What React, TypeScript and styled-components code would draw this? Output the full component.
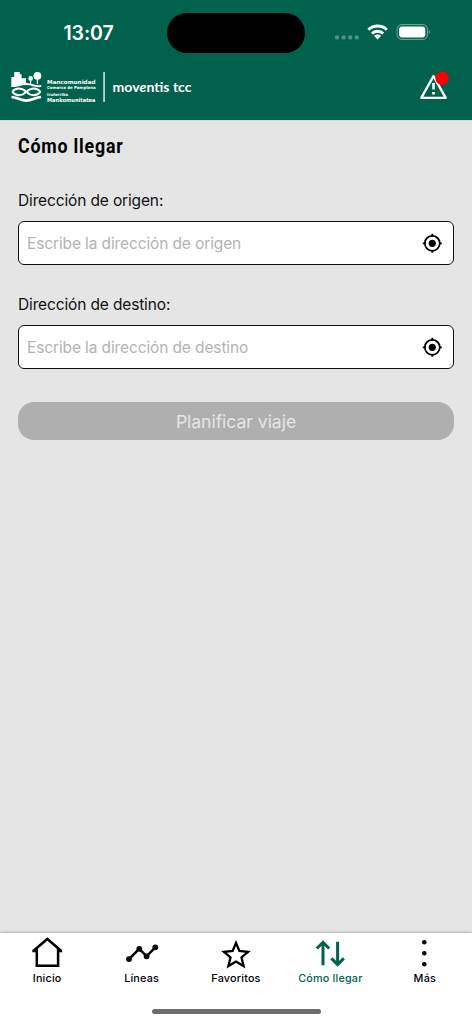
import React from "react";
import styled, { createGlobalStyle } from "styled-components";

const GREEN = "#00624c";

const GlobalStyle = createGlobalStyle`
  *, *::before, *::after { box-sizing: border-box; }
  html, body { margin: 0; padding: 0; }
  body { font-family: Inter, "Liberation Sans", sans-serif; color: #111; }
`;

const Screen = styled.div`
  display: flex;
  flex-direction: column;
  width: 100%;
  height: 1024px;
  background: #e5e5e5;
`;

const Header = styled.header`
  height: 120px;
  flex: none;
  background: ${GREEN};
  color: #fff;
`;

const StatusBar = styled.div`
  display: grid;
  grid-template-columns: 167px 138px 1fr;
  height: 65px;
  align-items: center;
`;

const Clock = styled.time`
  padding-left: 10px;
  text-align: center;
  font-size: 19.5px;
  font-weight: 600;
  line-height: 24px;
  letter-spacing: -0.1px;
`;

const Island = styled.div`
  height: 40px;
  border-radius: 20px;
  background: #000;
`;

const StatusIcons = styled.svg`
  display: block;
  width: 167px;
  height: 65px;
`;

const BrandBar = styled.div`
  display: flex;
  justify-content: space-between;
  height: 55px;
`;

const AlertButton = styled.button`
  width: 60px;
  height: 55px;
  padding: 0;
  border: 0;
  background: none;
  svg { display: block; }
`;

const Main = styled.main`
  flex: 1;
  padding: 12px 18px 0;
  border-top: 1px solid #d5dcda;
`;

const Title = styled.h1`
  margin: 0;
  height: 26px;
  font-family: Roboto, sans-serif;
  font-size: 20px;
  line-height: 26px;
  font-weight: 700;
  letter-spacing: 0.9px;
  color: #000;
  transform: scaleX(0.89);
  transform-origin: left;
`;

const Form = styled.form`
  display: flex;
  flex-direction: column;
  gap: 28px;
  padding-top: 30px;
`;

const Field = styled.label`
  display: flex;
  flex-direction: column;
  gap: 8px;
`;

const FieldLabel = styled.span`
  font-size: 15.5px;
  line-height: 24px;
  letter-spacing: -0.14px;
`;

const InputBox = styled.span`
  display: flex;
  align-items: center;
  height: 44px;
  padding: 0 11px 0 8px;
  border: 1px solid #111;
  border-radius: 6px;
  background: #fff;
`;

const Input = styled.input`
  flex: 1;
  min-width: 0;
  padding: 2px 0 0;
  border: 0;
  outline: 0;
  background: none;
  font: 400 15.5px/24px Inter, sans-serif;
  letter-spacing: -0.12px;
  &::placeholder { color: #b3b3b3; opacity: 1; }
`;

const PlanButton = styled.button`
  height: 38px;
  margin-top: 5px;
  padding: 1px 0 0;
  border: 0;
  border-radius: 16px;
  background: #afafaf;
  color: #e5e5e5;
  font: 400 17.6px/24px Inter, sans-serif;
  letter-spacing: -0.05px;
`;

const TabBar = styled.nav`
  display: grid;
  grid-template-columns: repeat(5, 1fr);
  height: 91px;
  flex: none;
  background: #fff;
  box-shadow: 0 -1px 2px rgba(0, 0, 0, 0.22);
  align-content: start;
`;

const Tab = styled.a<{ $active?: boolean }>`
  display: flex;
  flex-direction: column;
  align-items: center;
  gap: 2px;
  color: ${(p) => (p.$active ? GREEN : "#000")};
  font-size: 10.8px;
  font-weight: 500;
  line-height: 14px;
  letter-spacing: 0.19px;
  white-space: nowrap;
  svg { display: block; }
`;

const HomeIndicator = styled.div`
  grid-column: 1 / -1;
  justify-self: center;
  width: 169px;
  height: 5px;
  margin-top: 23px;
  border-radius: 3px;
  background: #6c6c6c;
`;

const Logo = () => (
  <svg width="210" height="55" viewBox="0 65 210 55" fill="#fff">
    <path d="M11.300 87V77h2.900v-5h5.600v2.200h1.800v4H26v5.300c-5-.5-8 3.500-14.700 3.500Z" />
    <circle cx="30.600" cy="78.400" r="2.300" />
    <circle cx="37.400" cy="75.800" r="3.900" />
    <path d="M30 79h1.200v5H30zM36.800 79H38v5h-1.200z" />
    <path d="M11.300 86.800c5-.2 8-3.900 15-3.900 6.500 0 10 3.700 15 2v2.200c-6 .8-9-2.200-15-2.200s-9.500 2.500-15 1.900Z" />
    <g fill="none" stroke="#fff">
      <path d="M12.200 91.900c3.500-4.400 9.500-4.400 14.100 0s10.600 4.400 14.100 0" strokeWidth="2" />
      <path d="M12.200 91.900c3.500 4.400 9.500 4.400 14.100 0s10.600-4.400 14.100 0" strokeWidth="2" />
      <path d="M11.500 97c5.500.2 9 3.700 14.800 3.700s9.300-3.500 14.800-3.700" strokeWidth="2.700" />
    </g>
    <g fontFamily="'DejaVu Sans', sans-serif" fontWeight="700">
      <text x="47" y="84" fontSize="5.500" textLength="48.500" lengthAdjust="spacingAndGlyphs">Mancomunidad</text>
      <text x="47" y="89.300" fontSize="4" textLength="48.500" lengthAdjust="spacingAndGlyphs">Comarca de Pamplona</text>
      <text x="47" y="96" fontSize="4" textLength="21" lengthAdjust="spacingAndGlyphs">Iruñerriko</text>
      <text x="47" y="101.600" fontSize="5.500" textLength="48.500" lengthAdjust="spacingAndGlyphs">Mankomunitatea</text>
    </g>
    <path d="M103.400 72h1.300v30h-1.300z" />
    <text x="112.500" y="91.700" fontFamily="Lato, sans-serif" fontWeight="700" fontSize="13.800" textLength="79" lengthAdjust="spacingAndGlyphs">
      mov<tspan fontStyle="italic">e</tspan>ntis tcc
    </text>
  </svg>
);

const DeviceStatus = () => (
  <StatusIcons viewBox="305 0 167 65" fill="#fff">
    <g opacity=".3">
      <circle cx="337" cy="37.400" r="2.200" />
      <circle cx="343.600" cy="37.400" r="2.200" />
      <circle cx="350.200" cy="37.400" r="2.200" />
      <circle cx="356.800" cy="37.400" r="2.200" />
    </g>
    <g fill="none" stroke="#fff" strokeWidth="2.900">
      <path d="M368.400 29.700a13.200 13.200 0 0 1 18.400 0" />
      <path d="M371.900 33.600a8 8 0 0 1 11.400 0" />
    </g>
    <path d="M374 35.800q3.600-3 7.200 0l-3.600 3.600Z" />
    <rect x="397.100" y="24.600" width="30.300" height="14.800" rx="4.700" fill="none" stroke="#fff" strokeOpacity=".45" />
    <rect x="399" y="26.600" width="26.300" height="10.800" rx="3.200" />
    <path d="M428.800 29.800q2 2.200 0 4.400Z" opacity=".5" />
  </StatusIcons>
);

const AlertIcon = () => (
  <svg width="60" height="55" viewBox="412 65 60 55">
    <path d="M433.500 76.100 421.300 97.900h24.400Z" fill="none" stroke="#fff" strokeWidth="2.300" strokeLinejoin="round" />
    <path d="M432.200 83h2.600v6.500h-2.600zM432.200 92h2.600v2.600h-2.600z" fill="#fff" />
    <circle cx="442.100" cy="78.300" r="6.700" fill="red" />
  </svg>
);

const LocateIcon = () => (
  <svg width="20" height="20" viewBox="0 0 20 20">
    <circle cx="10.300" cy="10.300" r="7.500" fill="none" stroke="#000" strokeWidth="1.800" />
    <circle cx="10.300" cy="10.300" r="3.600" />
    <path d="M10.300.8v2.500M10.300 17.300v2.500M.8 10.300h2.500M17.300 10.300h2.500" stroke="#000" strokeWidth="1.800" />
  </svg>
);

const HomeIcon = () => (
  <svg width="40" height="37" viewBox="0 0 40 37" fill="none" stroke="currentColor" strokeWidth="2.500">
    <path d="M6 18.200 20.300 6l14.300 12.200M5.300 18h4.500M30.500 18h4.700M9.800 16v16.800h21.300V16" />
  </svg>
);

const LinesIcon = () => (
  <svg width="40" height="37" viewBox="0 0 40 37" fill="currentColor">
    <path d="m7 26.100 10.300-10.300 7.300 7.500 8.700-9" fill="none" stroke="currentColor" strokeWidth="2.500" />
    <circle cx="7" cy="26.100" r="2.900" />
    <circle cx="17.300" cy="15.800" r="2.900" />
    <circle cx="24.600" cy="23.300" r="2.900" />
    <circle cx="33.300" cy="14.300" r="2.900" />
  </svg>
);

const StarIcon = () => (
  <svg width="40" height="37" viewBox="0 0 40 37" fill="none" stroke="currentColor" strokeWidth="2.300">
    <path d="m20 10 3.400 8 8.700.8-6.600 5.700 2.100 8.600-7.600-4.600-7.600 4.600 2.100-8.600-6.600-5.700 8.700-.8Z" />
  </svg>
);

const DirectionsIcon = () => (
  <svg width="40" height="37" viewBox="0 0 40 37" fill="none" stroke="currentColor" strokeWidth="3">
    <path d="M13 32.200V9.300M6.800 15.500 13 9.300l6.200 6.200M27.600 8.700v22.900M21.400 25.400l6.200 6.200 6.200-6.200" />
  </svg>
);

const MoreIcon = () => (
  <svg width="40" height="37" viewBox="0 0 40 37" fill="currentColor">
    <circle cx="19.300" cy="9.300" r="2.300" />
    <circle cx="19.300" cy="20.300" r="2.300" />
    <circle cx="19.300" cy="31.300" r="2.300" />
  </svg>
);

const AddressField = ({ label, placeholder }: { label: string; placeholder: string }) => (
  <Field>
    <FieldLabel>{label}</FieldLabel>
    <InputBox>
      <Input placeholder={placeholder} />
      <LocateIcon />
    </InputBox>
  </Field>
);

const tabs = [
  { label: "Inicio", Icon: HomeIcon },
  { label: "Líneas", Icon: LinesIcon },
  { label: "Favoritos", Icon: StarIcon },
  { label: "Cómo llegar", Icon: DirectionsIcon, active: true },
  { label: "Más", Icon: MoreIcon },
];

export default function App() {
  return (
    <>
      <GlobalStyle />
      <Screen>
        <Header>
          <StatusBar>
            <Clock>13:07</Clock>
            <Island />
            <DeviceStatus />
          </StatusBar>
          <BrandBar>
            <Logo />
            <AlertButton type="button" aria-label="Avisos">
              <AlertIcon />
            </AlertButton>
          </BrandBar>
        </Header>
        <Main>
          <Title>Cómo llegar</Title>
          <Form>
            <AddressField label="Dirección de origen:" placeholder="Escribe la dirección de origen" />
            <AddressField label="Dirección de destino:" placeholder="Escribe la dirección de destino" />
            <PlanButton type="button">Planificar viaje</PlanButton>
          </Form>
        </Main>
        <TabBar>
          {tabs.map(({ label, Icon, active }) => (
            <Tab key={label} $active={active}>
              <Icon />
              {label}
            </Tab>
          ))}
          <HomeIndicator />
        </TabBar>
      </Screen>
    </>
  );
}
